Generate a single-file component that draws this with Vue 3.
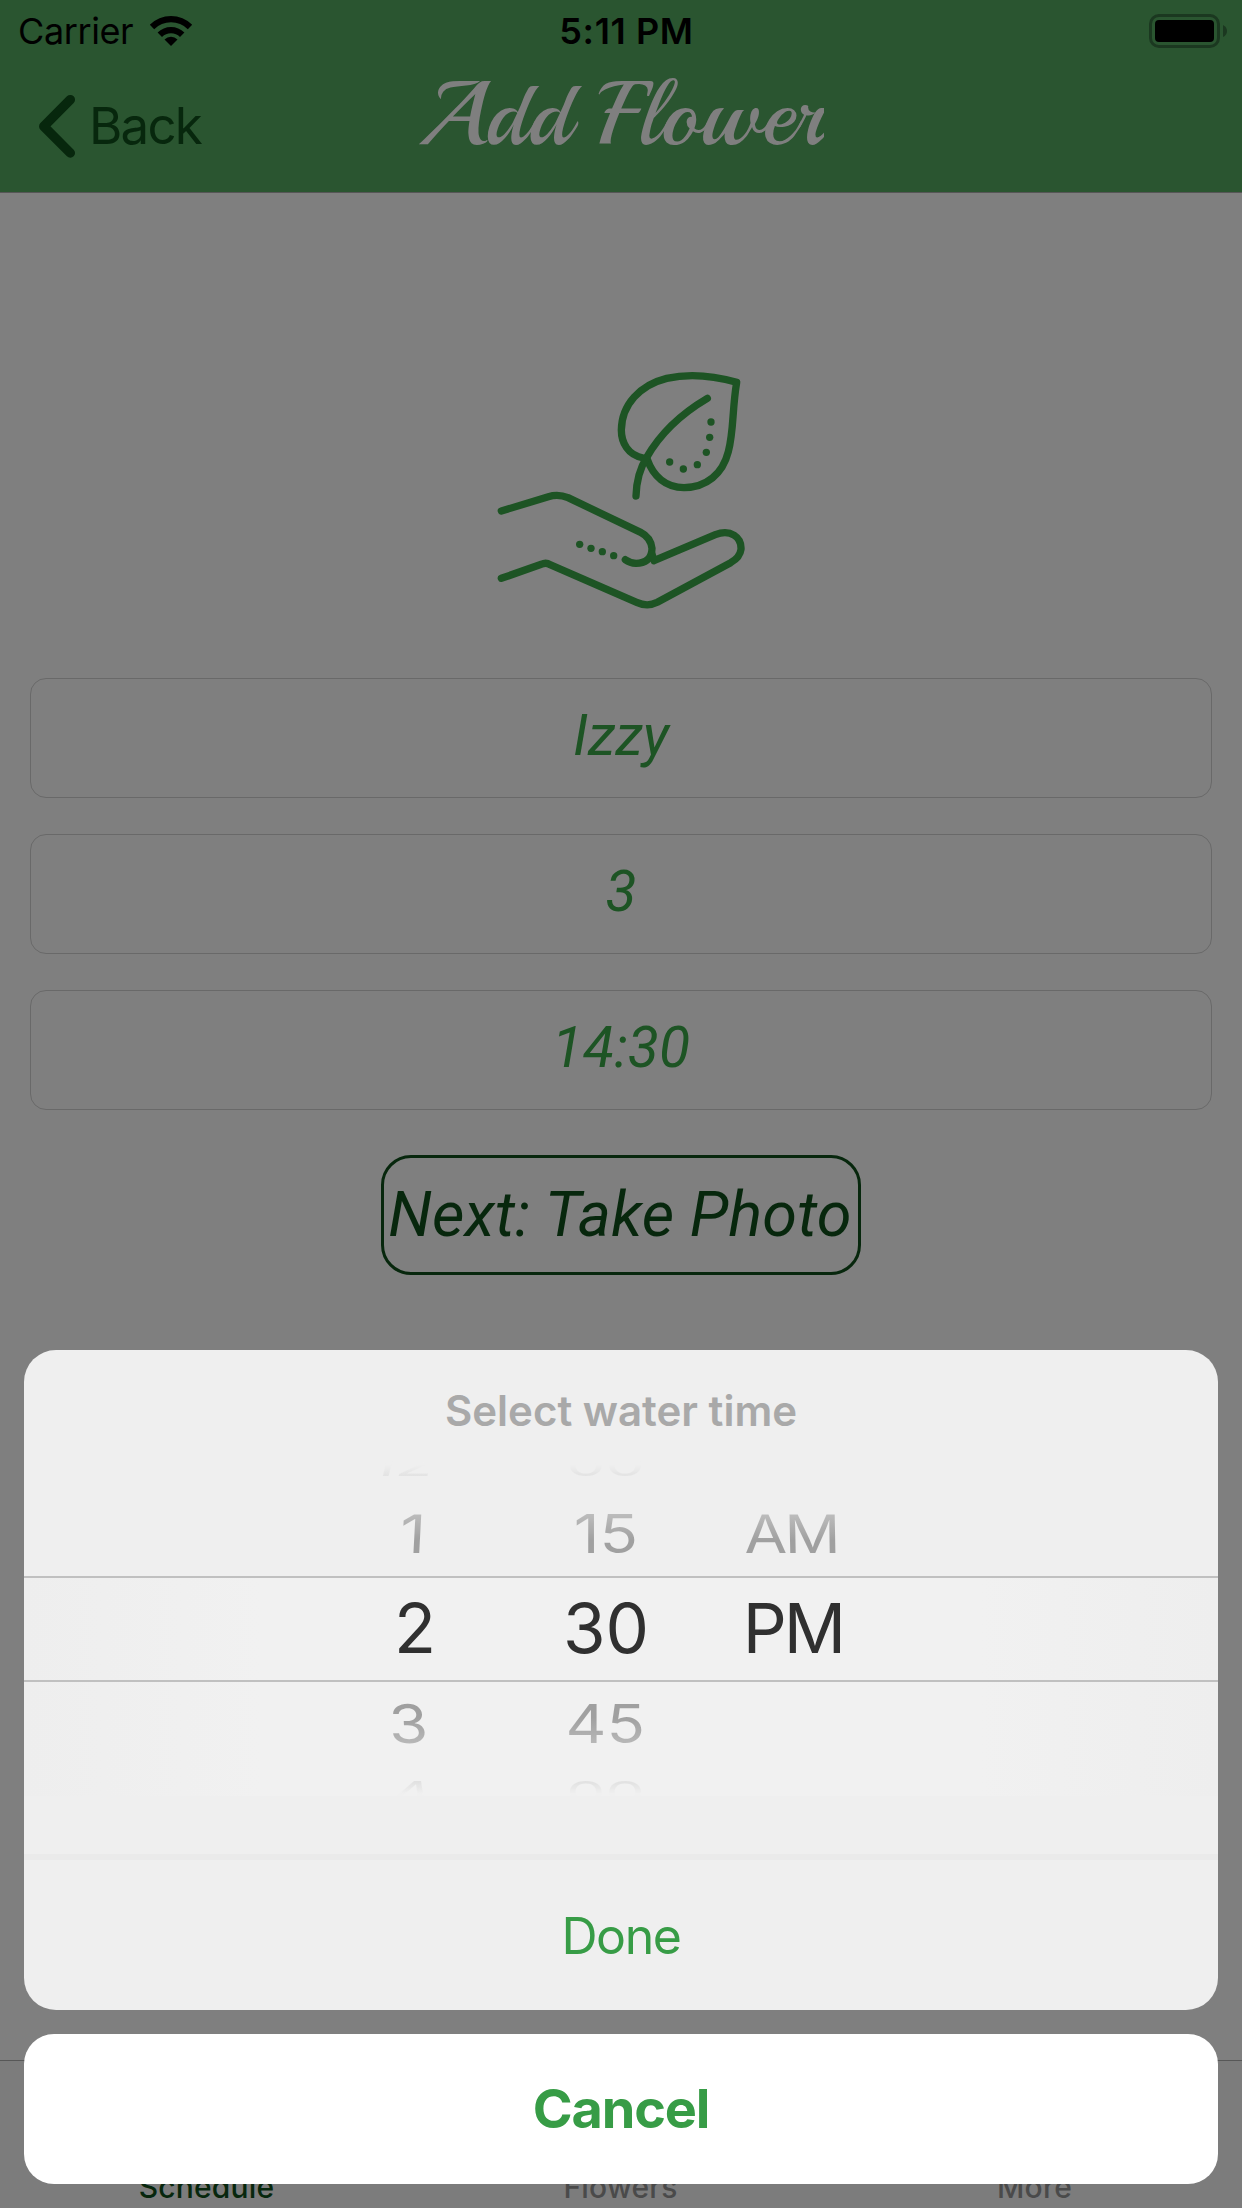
<script setup>
const fields = ['Izzy', '3', '14:30']

const tabs = [
  { label: 'Schedule', active: true },
  { label: 'Flowers', active: false },
  { label: 'More', active: false },
]

// dx: sideways drift of a label on the drum, in pixels; skew: its lean, in degrees
const rows = [
  { kind: 'far top', cells: [{ t: '12', dx: -9, skew: -14 }, { t: '00', dx: 0, skew: 0 }, { t: '', dx: 0, skew: 0 }] },
  { kind: 'near above', cells: [{ t: '1', dx: 1, skew: -3 }, { t: '15', dx: 0, skew: 0 }, { t: 'AM', dx: -2, skew: 1 }] },
  { kind: 'selected', cells: [{ t: '2', dx: 3, skew: 0 }, { t: '30', dx: 0, skew: 0 }, { t: 'PM', dx: 0, skew: 0 }] },
  { kind: 'near below', cells: [{ t: '3', dx: -4, skew: 3 }, { t: '45', dx: -1, skew: 0 }, { t: '', dx: 0, skew: 0 }] },
  { kind: 'far bottom', cells: [{ t: '4', dx: 0, skew: 8 }, { t: '00', dx: 0, skew: 0 }, { t: '', dx: 0, skew: 0 }] },
]
</script>

<template>
  <div class="screen">
    <header class="header">
      <div class="status">
        <div class="status-left">
          <span class="carrier">Carrier</span>
          <svg class="wifi" width="44" height="32" viewBox="149 14 44 32">
            <path d="M149.8 23.8A30 30 0 0 1 192.2 23.8L187.8 28.2A23.8 23.8 0 0 0 154.2 28.2Z" />
            <path d="M157.6 31.6A19 19 0 0 1 184.4 31.6L180 36A12.8 12.8 0 0 0 162 36Z" />
            <path d="M164.5 38.5A9.2 9.2 0 0 1 177.5 38.5L171 45Z" />
          </svg>
        </div>
        <span class="time">5:11 PM</span>
        <div class="status-right">
          <svg width="80" height="36" viewBox="1148 12 80 36">
            <rect x="1150.5" y="14.5" width="68" height="31" rx="8.5" fill="none" stroke="#1b3820" stroke-width="3" />
            <rect x="1155" y="19" width="59" height="22" rx="4" fill="#000" />
            <path d="M1223 24Q1227 26 1227 30T1223 36Z" fill="#1b3820" />
          </svg>
        </div>
      </div>
      <div class="nav">
        <div class="back">
          <svg width="40" height="66" viewBox="37 94 40 66">
            <path d="M70.3 99.7L43.8 126.4L70.3 153" />
          </svg>
          <span>Back</span>
        </div>
        <h1 class="title">Add Flower</h1>
        <div class="nav-end"></div>
      </div>
    </header>

    <main class="content">
      <svg class="plant" width="280" height="280" viewBox="0 0 840 840">
        <path d="M64 483L205 440Q235 431 264 443L482 547Q512 562 516 595C516 630 493 640 468 640Q450 639 436 629" />
        <path d="M516 612L522 632L706 554C752 536 785 562 783 598Q780 622 752 638L532 757Q502 772 470 757L210 644Q198 636 184 643L64 685" />
        <path d="M490 324C444 316 424 278 424 240C425 164 480 105 560 85Q655 64 770 97C756 180 762 240 745 305C728 372 680 412 612 413C558 412 520 380 501 326" />
        <path d="M682 145Q560 217 500 322Q470 370 468 438" />
        <g class="dots">
          <circle v-for="p in [[693,216],[689,262],[679,307],[652,344],[610,357],[569,336],[299,583],[333,595],[367,605],[401,617]]" :key="p.join()" :cx="p[0]" :cy="p[1]" r="11" />
        </g>
      </svg>
      <div class="fields">
        <div v-for="f in fields" :key="f" class="field">{{ f }}</div>
      </div>
      <button class="next">Next: Take Photo</button>
    </main>

    <nav class="tabs">
      <span v-for="t in tabs" :key="t.label" class="tab" :class="{ active: t.active }">{{ t.label }}</span>
    </nav>

    <div class="overlay">
      <section class="sheet">
        <h2 class="sheet-title">Select water time</h2>
        <div class="picker">
          <div v-for="(r, i) in rows" :key="i" class="row" :class="r.kind">
            <div v-for="(c, j) in r.cells" :key="j" class="cell">
              <span :style="{ '--dx': c.dx + 'px', '--skew': c.skew + 'deg' }">{{ c.t }}</span>
            </div>
          </div>
        </div>
        <button class="done">Done</button>
      </section>
      <button class="cancel">Cancel</button>
    </div>
  </div>
</template>

<style>
body {
  margin: 0;
  background: #7f7f7f;
}
</style>

<style scoped>
.screen {
  position: relative;
  display: flex;
  flex-direction: column;
  width: 1242px;
  height: 2208px;
  overflow: hidden;
  background: #7f7f7f;
  font-family: Inter, "Noto Sans", sans-serif;
}
button {
  padding: 0;
  border: 0;
  background: none;
  font-family: inherit;
}
.header {
  display: flex;
  flex-direction: column;
  height: 192px;
  border-bottom: 1px solid #565656;
  background: #2a5530;
}
.status {
  display: grid;
  grid-template-columns: 1fr auto 1fr;
  align-items: center;
  height: 61px;
  color: #000;
  font-size: 36px;
}
.status-left {
  display: flex;
  align-items: center;
  gap: 16px;
  padding-left: 18px;
}
.carrier {
  letter-spacing: -0.4px;
}
.time {
  padding-left: 11px;
  font-weight: 600;
  letter-spacing: 0.6px;
}
.status-right {
  display: flex;
  justify-content: flex-end;
  padding-right: 14px;
}
.nav {
  display: grid;
  grid-template-columns: 400px 1fr 400px;
  height: 131px;
}
.back {
  display: flex;
  align-items: center;
  gap: 12px;
  height: 131px;
  padding-left: 37px;
  color: #07270d;
  font-size: 51px;
  letter-spacing: -1.8px;
}
.back span {
  padding-bottom: 2px;
}
.back path {
  fill: none;
  stroke: #07270d;
  stroke-width: 9.5;
  stroke-linecap: round;
  stroke-linejoin: round;
}
.title {
  justify-self: center;
  align-self: start;
  margin: 0;
  overflow: hidden;
  color: #7f7f7f;
  font-family: Playball, "Liberation Serif", serif;
  font-size: 90px;
  font-weight: 400;
  line-height: 107px;
  white-space: nowrap;
}
.content {
  display: flex;
  flex: 1;
  flex-direction: column;
  align-items: center;
  padding: 157px 30px 0;
}
.plant {
  margin-right: 2px;
}
.plant path {
  fill: none;
  stroke: #1d5424;
  stroke-width: 22;
  stroke-linecap: round;
  stroke-linejoin: round;
}
.dots {
  fill: #1d5424;
}
.fields {
  display: flex;
  flex-direction: column;
  gap: 36px;
  width: 100%;
  margin-top: 48px;
}
.field {
  box-sizing: border-box;
  height: 120px;
  border: 1px solid #696969;
  border-radius: 16px;
  color: #1d5424;
  font: italic 400 57px/113px Roboto, sans-serif;
  text-align: center;
}
.next {
  box-sizing: border-box;
  width: 480px;
  height: 120px;
  margin-top: 45px;
  padding-right: 2px;
  border: 3px solid #07270d;
  border-radius: 30px;
  color: #07270d;
  font: italic 400 63px/114px Roboto, sans-serif;
  letter-spacing: 0.12px;
  white-space: nowrap;
}
.tabs {
  display: grid;
  grid-template-columns: repeat(3, 1fr);
  align-items: end;
  box-sizing: border-box;
  height: 148px;
  border-top: 1px solid #575757;
  background: #7c7c7c;
}
.tab {
  padding: 0 1px 3px 0;
  color: #4a4a4a;
  font-size: 30px;
  font-weight: 500;
  letter-spacing: 0.2px;
  line-height: 36px;
  text-align: center;
}
.tab.active {
  color: #07270d;
}
.overlay {
  position: absolute;
  inset: 0;
  display: flex;
  flex-direction: column;
  justify-content: flex-end;
  gap: 24px;
  padding: 0 24px 24px;
}
.sheet {
  display: flex;
  flex-direction: column;
  height: 660px;
  border-radius: 32px;
  background: #efefef;
}
.sheet-title {
  height: 111px;
  margin: 0;
  color: #a9a9a9;
  font-size: 42px;
  font-weight: 600;
  line-height: 121px;
  text-align: center;
}
.picker {
  height: 335px;
  margin-bottom: 58px;
  overflow: hidden;
}
.row {
  display: grid;
  grid-template-columns: 204px 184px 190px;
  align-items: center;
  box-sizing: border-box;
  padding-left: 286px;
  color: #303030;
  font-size: 69px;
}
.cell {
  display: flex;
  align-items: center;
  justify-content: center;
  height: 0;
}
.cell span {
  transform: translateX(var(--dx)) skewX(var(--skew)) scale(var(--sx), var(--sy));
  --sx: 1;
  --sy: 1;
}
.cell:last-child span {
  letter-spacing: -3px;
}
.far {
  height: 8px;
}
.far .cell span {
  --sx: 0.9;
  --sy: 0.44;
  background: linear-gradient(#efefef 50%, #e0e0e0 86%);
  background-clip: text;
  color: transparent;
}
.far.bottom .cell span {
  background-image: linear-gradient(#e0e0e0 20%, #f0f0f0 55%);
}
.near .cell span {
  --sx: 0.92;
  --sy: 0.77;
  background: linear-gradient(#bcbcbc 20%, #a0a0a0 60%);
  background-clip: text;
  color: transparent;
}
.near .cell:last-child span {
  --sx: 0.9;
}
.near.below .cell span {
  background-image: linear-gradient(#a0a0a0 40%, #b8b8b8 80%);
}
.near.above {
  height: 107px;
  padding-top: 23px;
}
.near.below {
  height: 106px;
  padding-bottom: 23px;
}
.selected {
  height: 106px;
  padding-bottom: 2px;
  border-top: 2px solid #c0c0c0;
  border-bottom: 2px solid #c0c0c0;
}
.selected,
.below,
.bottom {
  background: linear-gradient(90deg, #eeeeee, #f1f1f1 20%, #f1f1f1 80%, #eeeeee);
}
.done {
  flex: 1;
  padding-top: 1px;
  border-top: 6px solid #eaeaea;
  color: #379c46;
  font-size: 50px;
  font-weight: 400;
  letter-spacing: -1.4px;
}
.cancel {
  height: 150px;
  padding-bottom: 2px;
  border-radius: 30px;
  background: #fff;
  color: #379c46;
  font-size: 54px;
  font-weight: 700;
  letter-spacing: -1.2px;
}
</style>
